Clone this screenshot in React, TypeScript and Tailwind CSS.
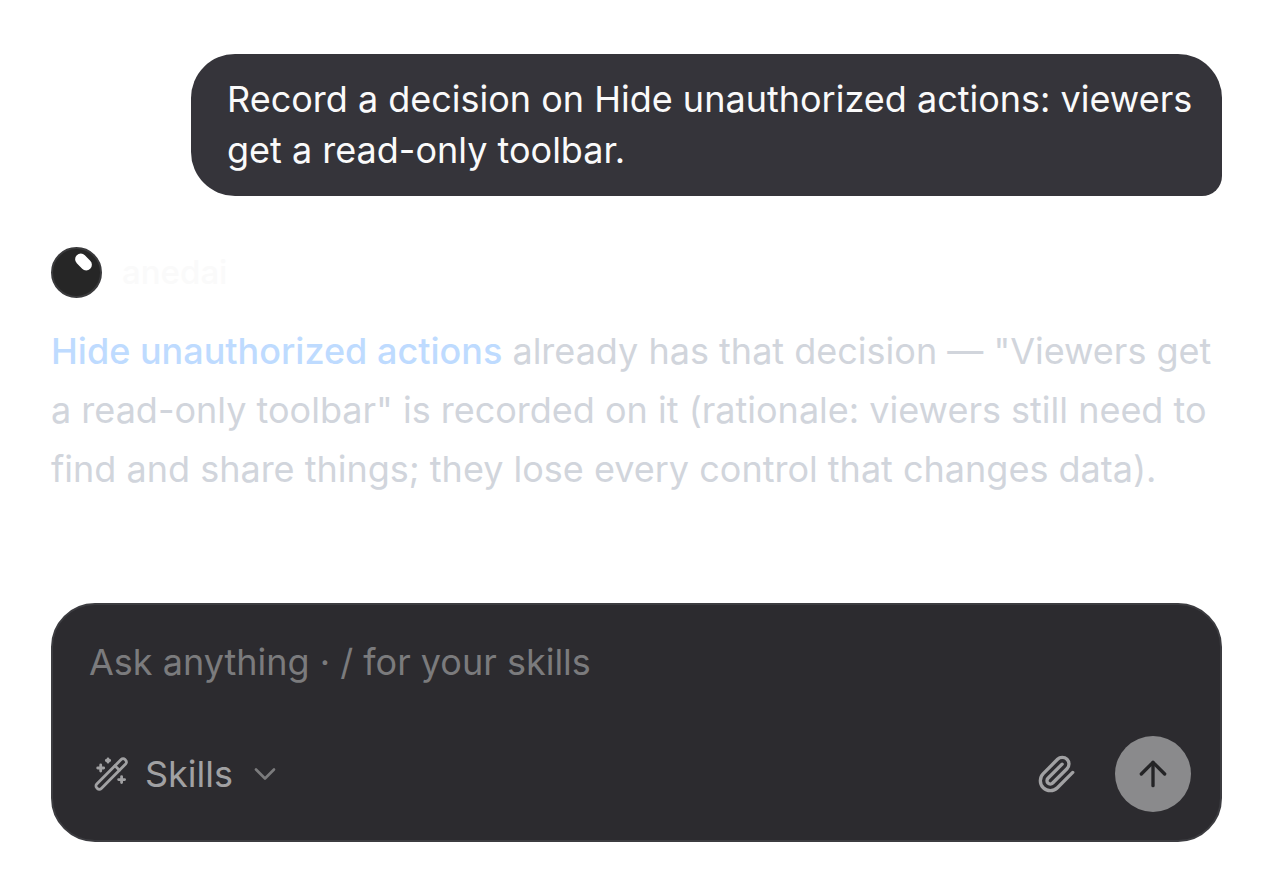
import React from "react";
import { ArrowUp, ChevronDown } from "lucide-react";

function SkillsIcon() {
  return (
    <svg width="36" height="36" viewBox="0 0 36 36" fill="none" stroke="currentColor" strokeWidth="2.8" strokeLinecap="round" strokeLinejoin="round" aria-hidden="true">
      <rect x="-3.200" y="-20" width="6.400" height="40" rx="2.800" transform="translate(18.200 18) rotate(45)" />
      <path d="M22 9.800 26.400 14.200" />
      <path d="M7.700 9v6M4.700 12h6M28.600 20.600v6M25.600 23.600h6M15 2.800v3.400M13.300 4.500h3.400" />
    </svg>
  );
}

function PaperclipIcon() {
  return (
    <svg width="40" height="40" viewBox="0 0 24 24" fill="none" stroke="currentColor" strokeWidth="2" strokeLinecap="round" strokeLinejoin="round" aria-hidden="true">
      <path d="m21.440 11.050-9.190 9.190a6 6 0 0 1-8.490-8.490l8.570-8.570A4 4 0 1 1 18 8.840l-8.590 8.570a2 2 0 0 1-2.830-2.830l8.490-8.480" />
    </svg>
  );
}

function AssistantMark() {
  return (
    <svg width="51" height="51" viewBox="0 0 51 51" aria-hidden="true">
      <circle cx="25.500" cy="25.500" r="24.500" fill="#262626" stroke="#3a3a3c" strokeWidth="2" />
      <rect x="-9.500" y="-5.700" width="19" height="11.400" rx="5.700" fill="#fff" transform="translate(32.500 15) rotate(45)" />
    </svg>
  );
}

export default function App() {
  return (
    <main className="flex min-h-screen w-full flex-col bg-white px-[51px] pt-[54px] pb-[51px] font-['Inter',sans-serif] text-4xl">
      <div className="ml-auto w-full max-w-[1031px] rounded-[44px] rounded-br-[20px] bg-[#35343a] py-5 pr-6 pl-9 leading-[51px] text-[#fafafa]">
        Record a decision on Hide unauthorized actions: viewers get a read-only toolbar.
      </div>

      <section className="mt-[51px]">
        <div className="flex items-center gap-5">
          <AssistantMark />
          <span className="text-[33px] font-medium leading-[51px] text-[#fafafa]">anedai</span>
        </div>
        <p className="mt-6 leading-[59px] text-[#d1d5dc]">
          <a href="#decision" className="font-medium text-[#bedbff]">Hide unauthorized actions</a>{" "}
          already has that decision — "Viewers get a read-only toolbar" is recorded on it (rationale: viewers still need to
          find and share things; they lose every control that changes data).
        </p>
      </section>

      {/* Composer */}
      <form onSubmit={(e) => e.preventDefault()} className="mt-auto rounded-[44px] border-2 border-[#3c3c40] bg-[#2c2b2f] pt-8 pr-[29px] pb-7 pl-7">
        <input
          type="text"
          aria-label="Message"
          placeholder="Ask anything · / for your skills"
          className="block w-full bg-transparent px-2 leading-[51px] outline-none placeholder:text-[#7b7b7d]"
        />
        <div className="mt-12 flex items-center justify-between">
          <button type="button" className="flex items-center px-3 text-[#a1a1a3]">
            <SkillsIcon />
            <span className="mr-[14px] ml-4">Skills</span>
            <ChevronDown size={36} strokeWidth={1.75} className="text-[#7b7b7d]" />
          </button>
          <div className="flex items-center gap-[38px]">
            <button type="button" aria-label="Attach file" className="text-[#a1a1a3]">
              <PaperclipIcon />
            </button>
            <button type="submit" aria-label="Send" className="flex size-[76px] items-center justify-center rounded-full bg-[#8a8a8c] text-[#242426]">
              <ArrowUp size={40} strokeWidth={2} />
            </button>
          </div>
        </div>
      </form>
    </main>
  );
}
